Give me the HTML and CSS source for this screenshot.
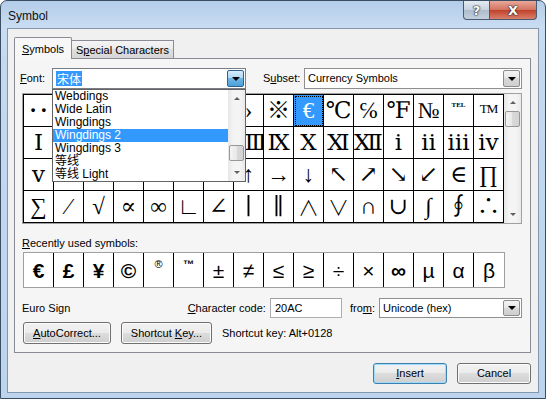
FILE: index.html
```html
<html>
<head>
<title>Symbol</title>
<meta charset="utf-8">
<link rel="stylesheet" href="styles.css">
</head>
<body>
<div class="window">
  <div class="titlebar">
    <span class="title">Symbol</span>
    <div class="caption">
      <span class="cap-btn help">?</span>
      <span class="cap-btn close">X</span>
    </div>
  </div>
  <div class="client">
    <div class="tabs">
      <span class="tab active"><u>S</u>ymbols</span>
      <span class="tab">S<u>p</u>ecial Characters</span>
    </div>
    <div class="panel">
      <div class="font-row">
        <label class="lbl font-lbl"><u>F</u>ont:</label>
        <div class="combo font-combo">
          <span class="combo-text"><span class="sel-text">宋体</span></span>
          <span class="drop-btn hot"><i class="tri"></i></span>
          <div class="droplist">
            <div class="items">
              <div class="item">Webdings</div>
              <div class="item">Wide Latin</div>
              <div class="item">Wingdings</div>
              <div class="item on">Wingdings 2</div>
              <div class="item">Wingdings 3</div>
              <div class="item cjk">等线</div>
              <div class="item cjk">等线 Light</div>
            </div>
            <div class="vscroll list-scroll">
              <span class="arrow"><i class="up"></i></span>
              <span class="track"><span class="thumb"></span></span>
              <span class="arrow"><i class="down"></i></span>
            </div>
          </div>
        </div>
        <label class="lbl subset-lbl">S<u>u</u>bset:</label>
        <div class="combo subset-combo">
          <span class="combo-text">Currency Symbols</span>
          <span class="drop-btn"><i class="tri"></i></span>
        </div>
      </div>

      <div class="grid-wrap">
        <div class="grid">
          <span class="cell dots">··</span><span class="cell">…</span><span class="cell">‰</span><span class="cell">′</span><span class="cell">″</span><span class="cell">‵</span><span class="cell">‹</span><span class="cell">›</span><span class="cell">※</span><span class="cell picked">€</span><span class="cell">℃</span><span class="cell">℅</span><span class="cell">℉</span><span class="cell">№</span><span class="cell tiny">TEL</span><span class="cell sm">TM</span>
          <span class="cell">Ⅰ</span><span class="cell">Ⅱ</span><span class="cell">Ⅲ</span><span class="cell">Ⅳ</span><span class="cell">Ⅴ</span><span class="cell">Ⅵ</span><span class="cell">Ⅶ</span><span class="cell">Ⅷ</span><span class="cell">Ⅸ</span><span class="cell">Ⅹ</span><span class="cell">Ⅺ</span><span class="cell">Ⅻ</span><span class="cell">ⅰ</span><span class="cell">ⅱ</span><span class="cell">ⅲ</span><span class="cell">ⅳ</span>
          <span class="cell">ⅴ</span><span class="cell">ⅵ</span><span class="cell">ⅶ</span><span class="cell">ⅷ</span><span class="cell">ⅸ</span><span class="cell">ⅹ</span><span class="cell">←</span><span class="cell">↑</span><span class="cell">→</span><span class="cell">↓</span><span class="cell">↖</span><span class="cell">↗</span><span class="cell">↘</span><span class="cell">↙</span><span class="cell">∈</span><span class="cell">∏</span>
          <span class="cell">∑</span><span class="cell">∕</span><span class="cell">√</span><span class="cell">∝</span><span class="cell">∞</span><span class="cell">∟</span><span class="cell">∠</span><span class="cell">∣</span><span class="cell">∥</span><span class="cell thin">∧</span><span class="cell thin">∨</span><span class="cell">∩</span><span class="cell">∪</span><span class="cell">∫</span><span class="cell">∮</span><span class="cell">∴</span>
        </div>
        <div class="vscroll grid-scroll">
          <span class="arrow"><i class="up"></i></span>
          <span class="track"><span class="thumb"></span></span>
          <span class="arrow"><i class="down"></i></span>
        </div>
      </div>

      <div class="recent-lbl"><u>R</u>ecently used symbols:</div>
      <div class="recent">
        <span class="rc b">€</span><span class="rc b">£</span><span class="rc b">¥</span><span class="rc b">©</span><span class="rc sup">®</span><span class="rc sup b">™</span><span class="rc">±</span><span class="rc">≠</span><span class="rc">≤</span><span class="rc">≥</span><span class="rc">÷</span><span class="rc">×</span><span class="rc b">∞</span><span class="rc">µ</span><span class="rc">α</span><span class="rc">β</span>
      </div>

      <div class="code-row">
        <span class="char-name">Euro Sign</span>
        <label class="lbl"><u>C</u>haracter code:</label>
        <span class="textbox">20AC</span>
        <label class="lbl from-lbl">fro<u>m</u>:</label>
        <div class="combo from-combo">
          <span class="combo-text">Unicode (hex)</span>
          <span class="drop-btn"><i class="tri"></i></span>
        </div>
      </div>

      <div class="btn-row">
        <span class="btn auto-btn"><span><u>A</u>utoCorrect...</span></span>
        <span class="btn key-btn"><span>Shortcut <u>K</u>ey...</span></span>
        <span class="key-text">Shortcut key: Alt+0128</span>
      </div>
    </div>

    <div class="dlg-buttons">
      <span class="btn default"><span><u>I</u>nsert</span></span>
      <span class="btn"><span>Cancel</span></span>
    </div>
  </div>
</div>
</body>
</html>
```

FILE: styles.css
```css
body{
	margin:0;
	background:#fff;
	color:#000;
	font:11px/13px "Liberation Sans",Arial,sans-serif;
}
*{box-sizing:border-box}
u{text-decoration:underline}

.window{
	width:546px;
	height:399px;
	display:flex;
	flex-direction:column;
	padding:0 6px 5px 6px;
	border:1px solid #3b4d63;
	border-radius:7px 7px 0 0;
	background:linear-gradient(#b3cce8,#c9ddf2 26px,#c4d9f0 60px,#bdd4ee);
}

/* title bar */
.titlebar{
	height:27px;
	display:flex;
	align-items:flex-start;
}
.title{
	margin:8px 0 0 1px;
	font-size:12px;
	line-height:14px;
	color:#111;
}
.caption{
	display:flex;
	margin-left:auto;
	margin-right:2px;
}
.cap-btn{
	height:19px;
	display:flex;
	align-items:center;
	justify-content:center;
	border:1px solid #4a5a70;
	border-top:none;
	color:#fff;
	font:bold 13px/13px "DejaVu Sans",sans-serif;
	text-shadow:0 0 1px #222,0 0 1px #222,0 0 2px #333;
}
.help{
	width:27px;
	border-radius:0 0 0 4px;
	background:linear-gradient(#e3eaf2,#c9d4e0 48%,#aebccd 52%,#c3d0de);
}
.close{
	width:47px;
	border-left:none;
	border-radius:0 0 4px 0;
	background:linear-gradient(#e8a89a,#d47461 48%,#c0422c 52%,#d9806c);
}

/* client area */
.client{
	flex:1;
	display:flex;
	flex-direction:column;
	padding:8px 7px 0 6px;
	border:1px solid #8396ad;
	background:#f0f0f0;
}
.tabs{
	height:22px;
	display:flex;
	align-items:flex-end;
}
.tab{
	width:102px;
	height:18px;
	margin-bottom:1px;
	padding-top:3px;
	text-align:center;
	border:1px solid #898c95;
	border-bottom:none;
	border-left:none;
	background:linear-gradient(#f4f4f4,#ebebeb 50%,#dedede 50%,#d6d6d6);
}
.tab.active{
	width:58px;
	height:22px;
	margin-bottom:0;
	padding-top:5px;
	border-left:1px solid #898c95;
	border-radius:2px 2px 0 0;
	background:#f7f7f7;
	position:relative;
	z-index:1;
}
.panel{
	height:295px;
	margin-top:-1px;
	border:1px solid #898c95;
	background:#f5f5f5;
}

/* font / subset row */
.font-row{
	height:21px;
	margin-top:9px;
	padding-left:5px;
	display:flex;
	align-items:center;
}
.lbl{white-space:nowrap}
.font-lbl{width:32px}
.subset-lbl{width:41px;margin-left:17px}
.combo{
	height:21px;
	display:flex;
	border:1px solid #8e8f8f;
	background:#fff;
	position:relative;
}
.font-combo{width:194px;border-color:#7a7d84}
.subset-combo{width:218px}
.combo-text{
	flex:1;
	display:flex;
	align-items:center;
	padding-left:3px;
	white-space:nowrap;
}
.sel-text{
	padding:0 1px;
	background:#3399ff;
	color:#fff;
	font:12px/15px "Noto Sans CJK SC",sans-serif;
}
.drop-btn{
	width:17px;
	margin:1px;
	display:flex;
	align-items:center;
	justify-content:center;
	border:1px solid #8c8c8c;
	border-radius:2px;
	background:linear-gradient(#f3f3f3,#e6e6e6 50%,#d8d8d8 50%,#cfcfcf);
}
.drop-btn.hot{
	border-color:#2c628b;
	background:linear-gradient(#d6ecfa,#a9d6f3 50%,#6fb6e6 50%,#4d9fd6);
}
.tri{
	width:0;
	height:0;
	border-left:4px solid transparent;
	border-right:4px solid transparent;
	border-top:4px solid #000;
}

/* open font list */
.droplist{
	position:absolute;
	top:20px;
	left:-1px;
	width:194px;
	height:93px;
	display:flex;
	border:1px solid #646464;
	background:#fff;
	z-index:5;
}
.items{flex:1;overflow:hidden}
.item{
	height:13px;
	padding-left:2px;
	line-height:13px;
	font-size:12px;
	white-space:nowrap;
}
.item.on{background:#3399ff;color:#fff}
.item.cjk{font-family:"Liberation Sans","Noto Sans CJK SC",sans-serif}

/* scroll bars */
.vscroll{
	width:17px;
	display:flex;
	flex-direction:column;
	background:linear-gradient(90deg,#e6e6e6,#f4f4f4 30%,#f4f4f4 70%,#e9e9e9);
}
.arrow{
	height:17px;
	display:flex;
	align-items:center;
	justify-content:center;
}
.arrow i{
	width:0;
	height:0;
	border-left:3px solid transparent;
	border-right:3px solid transparent;
}
.arrow .up{border-bottom:3px solid #606060}
.arrow .down{border-top:3px solid #606060}
.track{flex:1;display:flex;flex-direction:column;align-items:center}
.thumb{
	width:15px;
	height:16px;
	border:1px solid #979797;
	border-radius:2px;
	background:linear-gradient(90deg,#f4f4f4,#e8e8e8 50%,#d9d9d9 50%,#d3d3d3);
}
.list-scroll .thumb{margin-top:38px}

/* symbol grid */
.grid-wrap{
	width:500px;
	height:131px;
	margin:4px 0 0 7px;
	display:flex;
	border:1px solid #a0a0a0;
	background:#fff;
}
.grid{
	display:grid;
	grid-template-columns:repeat(16,30px);
	grid-auto-rows:32px;
	border-left:1px solid #000;
	border-top:1px solid #000;
	align-self:flex-start;
}
.cell{
	display:flex;
	align-items:center;
	justify-content:center;
	border-right:1px solid #000;
	border-bottom:1px solid #000;
	font:23px/1 "Liberation Serif","DejaVu Serif","Noto Sans CJK SC",serif;
	color:#000;
	overflow:hidden;
}
.cell.dots{font-weight:bold;letter-spacing:3px;padding-left:3px}
.cell.thin{font:300 21px/1 "Noto Sans CJK SC",serif}
.cell.picked{
	background:#3399ff;
	color:#fff;
	outline:1px dotted #000;
	outline-offset:-2px;
}
.cell.tiny{
	align-items:flex-start;
	padding-top:7px;
	font:bold 7px/1 "Liberation Serif",serif;
}
.cell.sm{
	align-items:flex-start;
	padding-top:7px;
	font-size:13px;
	letter-spacing:-1px;
}

/* recently used */
.recent-lbl{
	margin:13px 0 0 7px;
	line-height:13px;
}
.recent{
	width:482px;
	height:36px;
	margin:2px 0 0 8px;
	display:flex;
	border:1px solid #a0a0a0;
	background:#fff;
}
.rc{
	width:30px;
	display:flex;
	align-items:center;
	justify-content:center;
	border-right:1px solid #000;
	font:21px/1 "Liberation Sans",Arial,sans-serif;
}
.rc:last-child{border-right:none}
.rc.b{font-weight:bold}
.rc.sup{
	align-items:flex-start;
	padding-top:6px;
	font-size:11px;
}

/* character code row */
.code-row{
	height:20px;
	margin-top:10px;
	padding:0 8px 0 7px;
	display:flex;
	align-items:center;
}
.char-name{flex:1}
.textbox{
	width:72px;
	height:20px;
	margin-left:4px;
	padding-left:4px;
	display:flex;
	align-items:center;
	border:1px solid #abadb3;
	border-top-color:#a0a0a0;
	background:#fff;
}
.from-lbl{margin-left:8px}
.from-combo{width:143px;height:20px;margin-left:4px}

/* buttons */
.btn-row{
	height:22px;
	margin-top:4px;
	padding-left:8px;
	display:flex;
	align-items:center;
}
.btn{
	height:22px;
	display:flex;
	align-items:center;
	justify-content:center;
	border:1px solid #707070;
	border-radius:3px;
	background:linear-gradient(#f2f2f2,#ebebeb 50%,#dddddd 50%,#cfcfcf);
	box-shadow:inset 0 0 0 1px #fbfbfb;
	white-space:nowrap;
}
.auto-btn{width:88px}
.key-btn{width:91px;margin-left:10px}
.key-text{margin-left:10px}

.dlg-buttons{
	margin-top:10px;
	display:flex;
	justify-content:flex-end;
	gap:10px;
}
.dlg-buttons .btn{width:74px;height:21px}
.btn.default{
	border-color:#3c7fb1;
	box-shadow:inset 0 0 0 1px #9fdcf8;
}
```
